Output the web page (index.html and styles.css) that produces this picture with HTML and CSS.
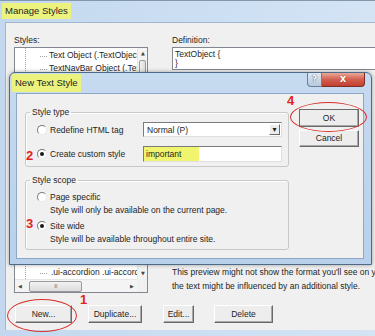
FILE: index.html
```html
<!DOCTYPE html>
<html lang="en">
  <head>
    <meta charset="UTF-8" />
    <title>Manage Styles</title>
    <link rel="stylesheet" href="styles.css">
  </head>
  <body>
    <div class="manage">
      <div class="manage-title"><span class="hl">Manage Styles</span></div>
      <div class="manage-body">
        <div class="cols">
          <div class="col-styles">
            <div class="lbl">Styles:</div>
            <div class="listbox">
              <div class="lb-items">
                <div class="tree-line"></div>
                <div class="lb-item">Text Object (.TextObject</div>
                <div class="lb-item">TextNavBar Object (.TextNavBar</div>
                <div class="lb-item last">.ui-accordion .ui-accordion</div>
              </div>
              <div class="vscroll">
                <span class="sarr">&#9650;</span>
                <span class="vthumb"></span>
                <span class="sfill"></span>
                <span class="sarr">&#9660;</span>
              </div>
              <div class="hscroll">
                <span class="sarr">&#9664;</span>
                <span class="hthumb">III</span>
                <span class="sfill"></span>
                <span class="sarr">&#9654;</span>
              </div>
              <div class="corner"></div>
            </div>
          </div>
          <div class="col-def">
            <div class="lbl">Definition:</div>
            <div class="defbox">TextObject {<br>}</div>
            <div class="note">
              This preview might not show the format you'll see on your page;<br>
              the text might be influenced by an additional style.
            </div>
          </div>
        </div>
        <div class="btns">
          <div class="btn btn-new">New...</div>
          <div class="btn btn-dup">Duplicate...</div>
          <div class="btn btn-edit">Edit...</div>
          <div class="btn btn-del">Delete</div>
        </div>
      </div>
    </div>

    <div class="dialog">
      <div class="dlg-title">
        <span class="hl">New Text Style</span>
        <div class="ctl">
          <span class="ctl-help">?</span>
          <span class="ctl-close">x</span>
        </div>
      </div>
      <div class="dlg-body">
        <div class="groups">
          <fieldset class="grp-type">
            <legend>Style type</legend>
            <div class="opt-row">
              <div class="radio-label"><span class="radio"></span>Redefine HTML tag</div>
              <div class="select">
                <span class="select-val">Normal (P)</span>
                <span class="select-arr">&#9662;</span>
              </div>
            </div>
            <div class="opt-row row2">
              <div class="radio-label"><span class="radio on"></span>Create custom style</div>
              <div class="text-input"><span class="hl2">important</span></div>
            </div>
          </fieldset>
          <fieldset class="grp-scope">
            <legend>Style scope</legend>
            <div class="scope-opt">
              <div class="radio-label"><span class="radio"></span>Page specific</div>
              <div class="desc">Style will only be available on the current page.</div>
            </div>
            <div class="scope-opt">
              <div class="radio-label"><span class="radio on"></span>Site wide</div>
              <div class="desc">Style will be available throughout entire site.</div>
            </div>
          </fieldset>
        </div>
        <div class="dlg-btns">
          <div class="btn btn-ok">OK</div>
          <div class="btn btn-cancel">Cancel</div>
        </div>
      </div>
    </div>

    <div class="ring ring-ok"></div>
    <div class="ring ring-new"></div>
    <div class="mark mark-1">1</div>
    <div class="mark mark-2">2</div>
    <div class="mark mark-3">3</div>
    <div class="mark mark-4">4</div>
  </body>
</html>
```

FILE: styles.css
```css
* {
  box-sizing: border-box;
}
body {
  margin: 0;
  width: 375px;
  height: 336px;
  overflow: hidden;
  position: relative;
  font-family: "Liberation Sans", Arial, sans-serif;
  font-size: 8.5px;
  color: #1e1e1e;
  background: #c8dbef;
}
.hl {
  display: inline-block;
  background: #ecf27e;
  padding: 1px 3px;
  line-height: 14px;
}

/* Manage Styles window */
.manage {
  height: 336px;
  display: flex;
  flex-direction: column;
  background: linear-gradient(90deg, #c3d8ef, #d4e4f5);
  border-top: 1px solid #8397ad;
}
.manage-title {
  height: 21px;
  padding: 2px 0 0 2px;
  font-size: 9.5px;
}
.manage-body {
  flex: 1;
  margin: 0 0 6px 5px;
  background: #f0f0f0;
  border-top: 1px solid #a3b7cc;
  border-left: 1px solid #a3b7cc;
  padding: 12px 0 7px 8px;
  display: flex;
  flex-direction: column;
  overflow: hidden;
}
.cols {
  display: flex;
  gap: 24px;
  flex: 1;
  min-height: 0;
}
.col-styles {
  width: 134px;
  display: flex;
  flex-direction: column;
}
.lbl {
  line-height: 11px;
  margin-bottom: 1px;
}
.listbox {
  flex: 1;
  border: 1px solid #828790;
  background: #fff;
  display: grid;
  grid-template-columns: 1fr 10px;
  grid-template-rows: 1fr 13px;
}
.lb-items {
  position: relative;
  display: flex;
  flex-direction: column;
  overflow: hidden;
  padding-top: 1px;
}
.tree-line {
  position: absolute;
  left: 10px;
  top: 0;
  bottom: 0;
  border-left: 1px dotted #a0a0a0;
}
.lb-item {
  position: relative;
  line-height: 13px;
  padding-left: 34px;
  white-space: nowrap;
}
.lb-item::before {
  content: "";
  position: absolute;
  left: 25px;
  top: 7px;
  width: 7px;
  border-top: 1px dotted #a0a0a0;
}
.lb-item.last {
  margin-top: auto;
  padding-left: 36px;
}
.vscroll {
  display: flex;
  flex-direction: column;
  background: #f4f4f4;
  border-left: 1px solid #e6e6e6;
}
.hscroll {
  display: flex;
  align-items: center;
  background: #f4f4f4;
  border-top: 1px solid #e6e6e6;
}
.corner {
  background: #f0f0f0;
}
.sarr {
  font-family: "DejaVu Sans", sans-serif;
  font-size: 5px;
  color: #444;
  width: 10px;
  height: 11px;
  line-height: 11px;
  text-align: center;
}
.sfill {
  flex: 1;
}
.vthumb {
  height: 34px;
  margin: 1px;
  border: 1px solid #9a9a9a;
  border-radius: 2px;
  background: linear-gradient(90deg, #f2f2f2, #dcdcdc);
}
.hthumb {
  width: 53px;
  height: 11px;
  margin-left: 4px;
  border: 1px solid #9a9a9a;
  border-radius: 2px;
  background: linear-gradient(#f2f2f2, #dcdcdc);
  font-size: 5px;
  line-height: 9px;
  color: #777;
  text-align: center;
  letter-spacing: -0.5px;
}
.col-def {
  flex: 1;
  min-width: 0;
  display: flex;
  flex-direction: column;
  overflow: hidden;
}
.defbox {
  height: 23px;
  margin-right: -3px;
  border: 1px solid #828790;
  background: #fff;
  padding: 2px 2px;
  line-height: 9px;
}
.note {
  margin-top: auto;
  white-space: nowrap;
  line-height: 14px;
}
.btns {
  display: flex;
  margin-top: 12px;
  height: 18px;
}
.btn {
  height: 18px;
  border: 1px solid;
  border-color: #fff #696969 #696969 #fff;
  box-shadow: inset -1px -1px 0 #a8a8a8;
  background: #ededed;
  text-align: center;
  line-height: 16px;
}
.btn-new {
  width: 57px;
  margin-left: 1px;
}
.btn-dup {
  width: 54px;
  margin-left: 16px;
}
.btn-edit {
  width: 31px;
  margin-left: 21px;
}
.btn-del {
  width: 59px;
  margin-left: 20px;
}

/* New Text Style dialog */
.dialog {
  position: absolute;
  left: 9px;
  top: 72px;
  width: 363px;
  height: 193px;
  border: 1px solid #4f6a87;
  border-radius: 6px 6px 0 0;
  background: linear-gradient(#c6daf0, #b8d0eb);
  box-shadow: 0 0 4px rgba(0, 0, 0, 0.35);
  display: flex;
  flex-direction: column;
}
.dlg-title {
  height: 20px;
  display: flex;
  justify-content: space-between;
  align-items: flex-start;
  padding: 0 6px 0 2px;
  font-size: 9.5px;
}
.dlg-title .hl {
  margin-top: 1px;
  padding: 2px 3px;
}
.ctl {
  display: flex;
}
.ctl-help {
  width: 15px;
  height: 14px;
  border: 1px solid #6b7f96;
  border-top: none;
  border-radius: 0 0 0 4px;
  background: linear-gradient(#dde8f4, #b6c9df);
  color: #fff;
  font: bold 9px "DejaVu Sans", sans-serif;
  line-height: 13px;
  text-align: center;
  text-shadow: 0 0 1px #4b5e75, 0 0 1px #4b5e75;
}
.ctl-close {
  width: 43px;
  height: 14px;
  border: 1px solid #7a2d25;
  border-top: none;
  border-left: none;
  border-radius: 0 0 4px 0;
  background: linear-gradient(#e9a898, #d25f4f 50%, #c23f2f);
  color: #fff;
  font: bold 10px "DejaVu Sans", sans-serif;
  line-height: 12px;
  text-align: center;
  text-shadow: 0 0 1px #6b2018;
}
.dlg-body {
  flex: 1;
  margin: 0 7px 5px 6px;
  background: #f0f0f0;
  border: 1px solid #8ea7c3;
  display: flex;
  gap: 10px;
  padding: 13px 4px 0 8px;
}
.groups {
  width: 264px;
}
fieldset {
  margin: 0;
  min-width: 0;
  border: 1px solid #c8c8c8;
  border-radius: 3px;
  box-shadow: inset 1px 1px 0 #fff;
  padding: 4px 6px 4px 11px;
}
legend {
  margin-left: -7px;
  padding: 0 2px;
  line-height: 11px;
}
.opt-row {
  display: flex;
  align-items: center;
  height: 15px;
}
.opt-row.row2 {
  height: 16px;
  margin-top: 9px;
}
.radio-label {
  width: 106px;
  display: flex;
  align-items: center;
  gap: 3px;
  height: 14px;
}
.radio {
  width: 10px;
  height: 10px;
  border-radius: 50%;
  border: 1px solid;
  border-color: #7a7a7a #e8e8e8 #e8e8e8 #7a7a7a;
  background: #fff;
  display: flex;
  align-items: center;
  justify-content: center;
}
.radio.on::after {
  content: "";
  width: 4px;
  height: 4px;
  border-radius: 50%;
  background: #1a1a1a;
}
.select {
  width: 139px;
  height: 15px;
  border: 1px solid;
  border-color: #7b7b7b #e0e0e0 #e0e0e0 #7b7b7b;
  background: #fff;
  display: flex;
  align-items: center;
  padding: 0 1px 0 3px;
}
.select-val {
  flex: 1;
}
.select-arr {
  width: 11px;
  height: 11px;
  border: 1px solid;
  border-color: #fff #6a6a6a #6a6a6a #fff;
  background: #ececec;
  font-family: "DejaVu Sans", sans-serif;
  font-size: 8px;
  line-height: 9px;
  text-align: center;
}
.text-input {
  width: 139px;
  height: 16px;
  border: 1px solid;
  border-color: #7b7b7b #e0e0e0 #e0e0e0 #7b7b7b;
  background: #fff;
  display: flex;
}
.hl2 {
  width: 55px;
  background: #f0f46e;
  padding: 0 2px;
  line-height: 14px;
}
.grp-scope {
  margin-top: 8px;
  padding-bottom: 3px;
}
.scope-opt + .scope-opt {
  margin-top: 2px;
}
.desc {
  padding-left: 13px;
  line-height: 13px;
  white-space: nowrap;
}
.dlg-btns {
  display: flex;
  flex-direction: column;
  gap: 3px;
  margin-top: 2px;
  width: 60px;
}
.btn-ok {
  border-color: #fff #3f3f3f #3f3f3f #fff;
  outline: 1px solid #6a6a6a;
  outline-offset: -1px;
}
.btn-cancel {
  height: 17px;
  line-height: 15px;
}

/* red annotations drawn over the screenshot */
.ring {
  position: absolute;
  border: 1.5px solid #d8302a;
  border-radius: 50%;
}
.ring-ok {
  left: 290px;
  top: 102px;
  width: 77px;
  height: 30px;
}
.ring-new {
  left: 7px;
  top: 299px;
  width: 70px;
  height: 33px;
}
.mark {
  position: absolute;
  color: #e3221d;
  font: bold 13px "Liberation Sans", Arial, sans-serif;
  line-height: 11px;
}
.mark-1 {
  left: 80px;
  top: 294px;
}
.mark-2 {
  left: 26px;
  top: 150px;
}
.mark-3 {
  left: 26px;
  top: 218px;
}
.mark-4 {
  left: 287px;
  top: 95px;
}
```
